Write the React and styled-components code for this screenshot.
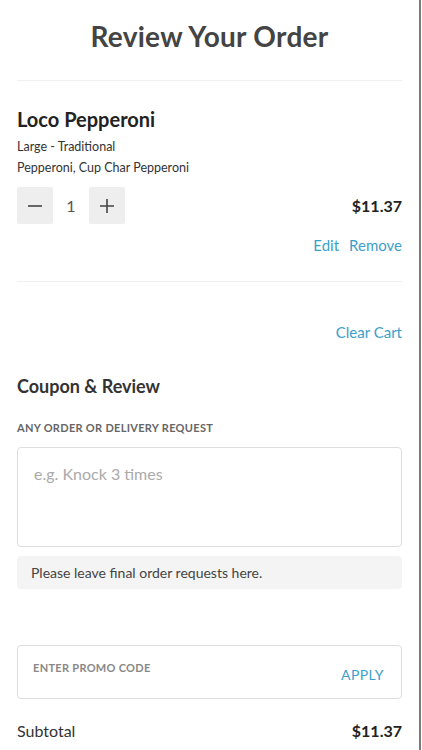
import styled, { createGlobalStyle } from "styled-components";

const GlobalStyle = createGlobalStyle`
  html, body {
    margin: 0;
    padding: 0;
    background: #fff;
  }
  body {
    font-family: "Lato", "Open Sans", sans-serif;
    color: #333;
  }
`;

export default function App() {
  return (
    <>
      <GlobalStyle />
      <Page>
        <Title>Review Your Order</Title>
        <Divider />

        <Item>
          <ItemName>Loco Pepperoni</ItemName>
          <ItemDetail>Large - Traditional</ItemDetail>
          <ItemDetail>Pepperoni, Cup Char Pepperoni</ItemDetail>

          <QtyRow>
            <Stepper>
              <StepButton aria-label="decrease">
                <svg width="16" height="16" viewBox="0 0 16 16">
                  <path d="M1 8h14" stroke="#444" strokeWidth="1.6" />
                </svg>
              </StepButton>
              <Qty>1</Qty>
              <StepButton aria-label="increase">
                <svg width="16" height="16" viewBox="0 0 16 16">
                  <path d="M1 8h14M8 1v14" stroke="#444" strokeWidth="1.6" />
                </svg>
              </StepButton>
            </Stepper>
            <Price>$11.37</Price>
          </QtyRow>

          <Actions>
            <LinkButton>Edit</LinkButton>
            <LinkButton>Remove</LinkButton>
          </Actions>
        </Item>

        <Divider />

        <ClearRow>
          <LinkButton>Clear Cart</LinkButton>
        </ClearRow>

        <SectionTitle>Coupon &amp; Review</SectionTitle>
        <FieldLabel>ANY ORDER OR DELIVERY REQUEST</FieldLabel>
        <RequestBox placeholder="e.g. Knock 3 times" />
        <Note>Please leave final order requests here.</Note>

        <PromoBox>
          <PromoLabel>ENTER PROMO CODE</PromoLabel>
          <ApplyButton>APPLY</ApplyButton>
        </PromoBox>

        <TotalRow>
          <TotalLabel>Subtotal</TotalLabel>
          <Price>$11.37</Price>
        </TotalRow>
      </Page>
    </>
  );
}

const Page = styled.div`
  box-sizing: border-box;
  width: 421px;
  min-height: 750px;
  padding: 0 17px 20px 17px;
  border-right: 2px solid #7a7a7a;
`;

const Title = styled.h1`
  margin: 0;
  padding-top: 19px;
  height: 60px;
  box-sizing: border-box;
  text-align: center;
  font-size: 28px;
  font-weight: 700;
  color: #444;
  letter-spacing: 0.3px;
  line-height: 34px;
`;

const Divider = styled.div`
  height: 1px;
  background: #f0f0f0;
  margin-top: 20px;
`;

const Item = styled.div`
  padding-top: 25px;
  padding-bottom: 6px;
`;

const ItemName = styled.div`
  font-size: 20px;
  font-weight: 700;
  color: #222;
  line-height: 26px;
  margin-bottom: 4px;
`;

const ItemDetail = styled.div`
  font-size: 12.5px;
  color: #333;
  line-height: 21px;
`;

const QtyRow = styled.div`
  display: flex;
  align-items: center;
  justify-content: space-between;
  margin-top: 9px;
`;

const Stepper = styled.div`
  display: flex;
  align-items: center;
`;

const StepButton = styled.button`
  width: 36px;
  height: 37px;
  border: none;
  border-radius: 2px;
  background: #eeeeee;
  display: flex;
  align-items: center;
  justify-content: center;
  padding: 0;
`;

const Qty = styled.span`
  width: 36px;
  text-align: center;
  font-size: 16px;
  color: #555;
`;

const Price = styled.span`
  font-size: 16px;
  font-weight: 700;
  color: #222;
`;

const Actions = styled.div`
  display: flex;
  justify-content: flex-end;
  gap: 10px;
  margin-top: 11px;
`;

const LinkButton = styled.button`
  border: none;
  background: none;
  padding: 0;
  font-family: inherit;
  font-size: 15px;
  color: #3b9fca;
  line-height: 20px;
`;

const ClearRow = styled.div`
  display: flex;
  justify-content: flex-end;
  margin-top: 40px;
`;

const SectionTitle = styled.h2`
  margin: 32px 0 0 0;
  font-size: 18px;
  font-weight: 700;
  color: #333;
  line-height: 24px;
`;

const FieldLabel = styled.div`
  margin-top: 23px;
  font-size: 11px;
  font-weight: 700;
  color: #666;
  letter-spacing: 0.3px;
  line-height: 14px;
`;

const RequestBox = styled.textarea`
  display: block;
  box-sizing: border-box;
  width: 100%;
  height: 100px;
  margin-top: 12px;
  padding: 16px 16px;
  border: 1px solid #dedede;
  border-radius: 4px;
  resize: none;
  font-family: inherit;
  font-size: 16px;
  color: #333;
  &::placeholder {
    color: #aaa;
  }
`;

const Note = styled.div`
  margin-top: 9px;
  height: 33px;
  display: flex;
  align-items: center;
  padding: 0 14px;
  background: #f4f4f4;
  border-radius: 4px;
  font-size: 14px;
  color: #444;
`;

const PromoBox = styled.div`
  box-sizing: border-box;
  margin-top: 56px;
  height: 54px;
  border: 1px solid #dedede;
  border-radius: 4px;
  display: flex;
  justify-content: space-between;
  padding: 15px 17px 0 15px;
`;

const PromoLabel = styled.span`
  font-size: 11px;
  font-weight: 700;
  color: #888;
  letter-spacing: 0.3px;
  line-height: 14px;
`;

const ApplyButton = styled.button`
  border: none;
  background: none;
  padding: 0;
  margin-top: 4px;
  height: 18px;
  font-family: inherit;
  font-size: 14px;
  color: #3b9fca;
  letter-spacing: 0.4px;
`;

const TotalRow = styled.div`
  display: flex;
  justify-content: space-between;
  align-items: center;
  margin-top: 22px;
`;

const TotalLabel = styled.span`
  font-size: 16px;
  color: #333;
`;
